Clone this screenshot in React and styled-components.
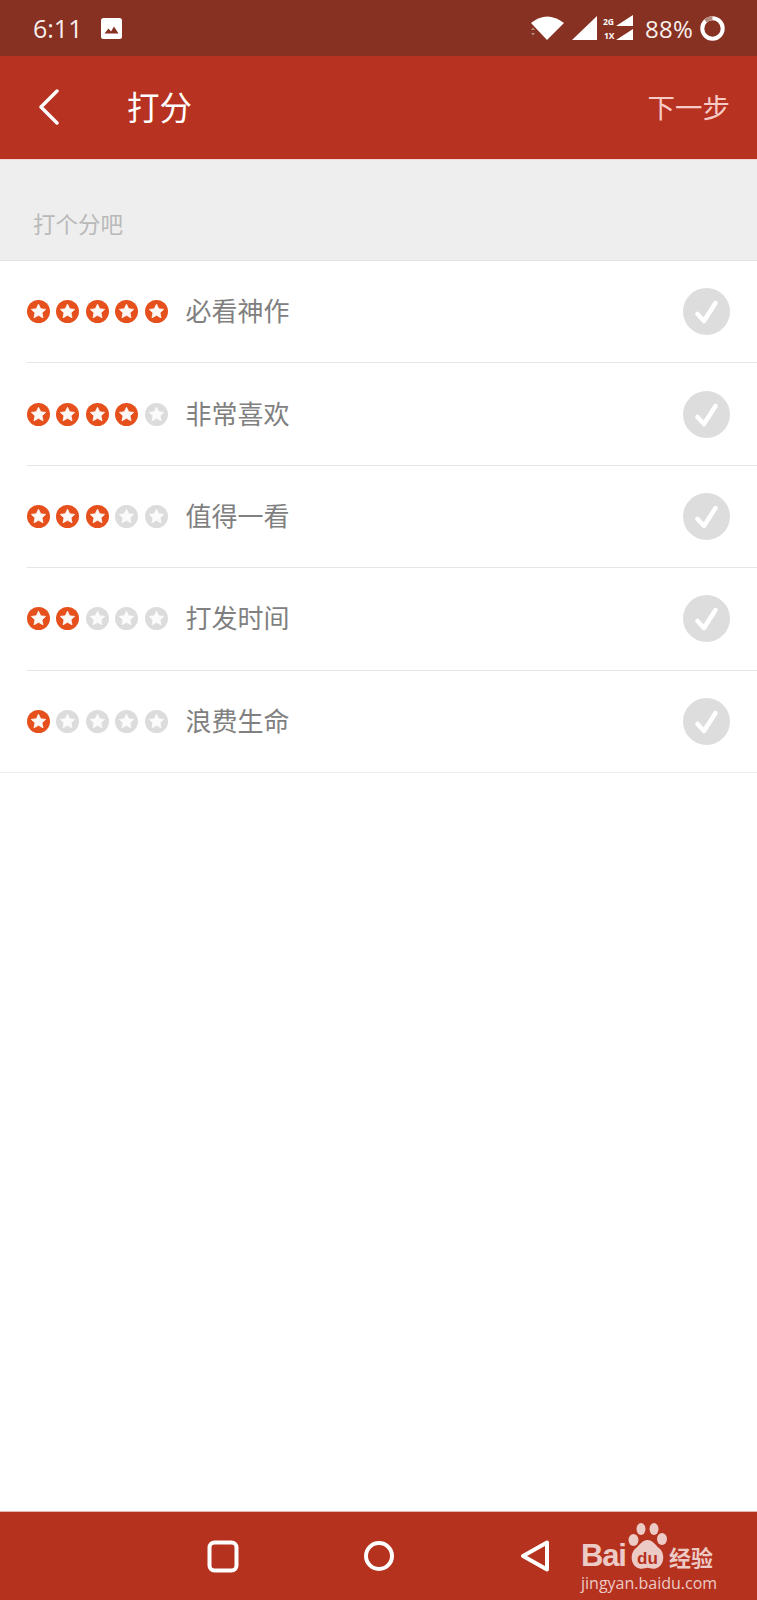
import React from "react";
import styled, { createGlobalStyle } from "styled-components";

const CJK = `"Noto Sans CJK SC", "Noto Sans", sans-serif`;

const GlobalStyle = createGlobalStyle`
  html, body {
    margin: 0;
    padding: 0;
    background: #fff;
    font-family: ${CJK};
  }
`;

const Page = styled.div`
  width: 757px;
  height: 1600px;
  display: flex;
  flex-direction: column;
  overflow: hidden;
  position: relative;
  background: #fff;
`;

const StatusBar = styled.div`
  height: 56px;
  flex: none;
  background: #873122;
  display: flex;
  align-items: center;
  padding: 0 32px 0 33px;
  color: #f7efed;
  font-family: "Open Sans", sans-serif;
  font-size: 25px;
`;

const Time = styled.span`
  width: 68px;
`;

const StatusRight = styled.div`
  margin-left: auto;
  display: flex;
  align-items: center;
`;

const Percent = styled.span`
  margin: 0 7px 0 11px;
  font-size: 24px;
  letter-spacing: 0.2px;
`;

const AppBar = styled.header`
  height: 104px;
  flex: none;
  box-sizing: border-box;
  background: #b73220;
  border-bottom: 1px solid #f3d9d5;
  display: flex;
  align-items: center;
  padding: 0 27px 2px 38px;
  color: #fff;
`;

const Title = styled.h1`
  margin: 0 0 0 67px;
  font-size: 32.500px;
  font-weight: 400;
  line-height: 1;
`;

const NextButton = styled.span`
  margin-left: auto;
  font-size: 27.500px;
  line-height: 1;
  color: #f6cbc5;
`;

const SectionHead = styled.div`
  height: 101px;
  flex: none;
  box-sizing: border-box;
  background: #eeeeee;
  border-bottom: 1px solid #e2e2e2;
  display: flex;
  align-items: flex-end;
  padding: 0 32px 22px 33px;
  font-size: 22.500px;
  line-height: 30px;
  color: #b9b9b9;
`;

const List = styled.ul`
  list-style: none;
  margin: 0;
  padding: 0;
`;

const Row = styled.li`
  height: 102.400px;
  box-sizing: border-box;
  margin-left: ${(p) => (p.$last ? 0 : "27px")};
  padding: ${(p) => (p.$last ? "0 27px 0 27px" : "0 27px 0 0")};
  border-bottom: 1px solid ${(p) => (p.$last ? "#eeeeee" : "#e6e6e6")};
  display: flex;
  align-items: center;
`;

const Stars = styled.div`
  display: flex;
  gap: 6.400px;
  margin-right: 18px;
`;

const StarDisc = styled.svg`
  width: 23px;
  height: 23px;
  display: block;
`;

const Label = styled.span`
  font-size: 26px;
  line-height: 1;
  color: #808080;
  margin-top: -3px;
`;

const CheckDisc = styled.svg`
  width: 47px;
  height: 47px;
  margin-left: auto;
  display: block;
`;

const Spacer = styled.div`
  flex: 1;
`;

const NavBar = styled.nav`
  height: 89px;
  flex: none;
  box-sizing: border-box;
  background: #b5321f;
  border-top: 1px solid #e3b7b0;
  display: flex;
  align-items: center;
  justify-content: center;
  gap: 122px;
`;

const NavIcon = styled.svg`
  width: 34px;
  height: 34px;
  display: block;
  fill: none;
  stroke: #fff;
  stroke-width: 4;
  stroke-linejoin: round;
`;

const Watermark = styled.div`
  position: absolute;
  left: 581px;
  bottom: 7px;
  width: 136px;
  color: #eccac5;
`;

const BrandLine = styled.div`
  display: flex;
  align-items: flex-end;
  height: 47px;
`;

const BrandBai = styled.span`
  font-family: "Liberation Sans", sans-serif;
  font-weight: 700;
  font-size: 31px;
  line-height: 29px;
  letter-spacing: -1.200px;
  width: 46px;
`;

const BrandPaw = styled.svg`
  width: 41px;
  height: 47px;
  display: block;
  flex: none;
  margin-right: 1px;
`;

const BrandJy = styled.span`
  font-size: 22px;
  font-weight: 700;
  line-height: 28px;
  white-space: nowrap;
`;

const BrandUrl = styled.div`
  font-family: "Open Sans", sans-serif;
  font-size: 16px;
  line-height: 20px;
  margin-top: 3px;
  white-space: nowrap;
`;

const StarIcon = ({ on }) => (
  <StarDisc viewBox="0 0 23 23">
    <circle cx="11.5" cy="11.5" r="11.5" fill={on ? "#e5501c" : "#dcdcdc"} />
    <path
      d="M11.5 4.2l2.2 4.6 5 .6-3.7 3.4 1 5-4.5-2.5L7 17.8l1-5-3.7-3.4 5-.6z"
      fill="#fff"
      stroke="#fff"
      strokeWidth="0.8"
      strokeLinejoin="round"
      opacity={on ? 0.96 : 0.9}
    />
  </StarDisc>
);

const CheckIcon = () => (
  <CheckDisc viewBox="0 0 47 47">
    <circle cx="23.5" cy="23.5" r="23.5" fill="#dddddd" />
    <path
      d="M14.5 26l6.5 7 11.500-18"
      fill="none"
      stroke="#fff"
      strokeWidth="4.500"
      strokeLinecap="round"
      strokeLinejoin="round"
    />
  </CheckDisc>
);

const ratings = [
  { score: 5, label: "必看神作" },
  { score: 4, label: "非常喜欢" },
  { score: 3, label: "值得一看" },
  { score: 2, label: "打发时间" },
  { score: 1, label: "浪费生命" },
];

const App = () => (
  <Page>
    <GlobalStyle />
    <StatusBar>
      <Time>6:11</Time>
      <svg width="21" height="21" viewBox="0 0 21 21">
        <rect width="21" height="21" rx="2.500" fill="#fff" />
        <path d="M3.500 15.500l4-5 2.500 3 3-5 4.500 7z" fill="#873122" />
      </svg>
      <StatusRight>
        <svg width="36" height="26" viewBox="0 0 36 26">
          <path d="M1 8 Q17 -5 34 8 L17 25z" fill="#fff" />
          <path d="M1 15l2-2.500 2 2.500zM1 18l2 2.500 2-2.500z" fill="#b58a80" />
        </svg>
        <svg width="25" height="26" viewBox="0 0 25 26" style={{ marginLeft: 6 }}>
          <path d="M0 25 L25 1 V25z" fill="#fff" />
        </svg>
        <svg width="31" height="26" viewBox="0 0 31 26" style={{ marginLeft: 6 }}>
          <text x="0" y="10" fontSize="8.500" fontWeight="700" fill="#fff" fontFamily="Open Sans">2G</text>
          <text x="1" y="24" fontSize="8.500" fontWeight="700" fill="#fff" fontFamily="Open Sans">1X</text>
          <path d="M13 11 L30 0 V11z M13 25 L30 14 V25z" fill="#fff" />
        </svg>
        <Percent>88%</Percent>
        <svg width="25" height="25" viewBox="0 0 25 25">
          <circle cx="12.500" cy="12.500" r="10.200" fill="none" stroke="#fff" strokeWidth="4" />
          <path d="M12.500 2.300 A10.200 10.200 0 0 0 5.500 5" fill="none" stroke="#b58a80" strokeWidth="4" />
        </svg>
      </StatusRight>
    </StatusBar>

    <AppBar>
      <svg width="22" height="36" viewBox="0 0 22 36">
        <path d="M19 2L3 18l16 16" fill="none" stroke="#fff" strokeWidth="3.400" strokeLinecap="round" strokeLinejoin="round" />
      </svg>
      <Title>打分</Title>
      <NextButton>下一步</NextButton>
    </AppBar>

    <SectionHead>打个分吧</SectionHead>

    <List>
      {ratings.map((r, i) => {
        const last = i === ratings.length - 1;
        return (
          <Row key={r.score} $last={last}>
            <Stars>
              {[1, 2, 3, 4, 5].map((n) => (
                <StarIcon key={n} on={n <= r.score} />
              ))}
            </Stars>
            <Label>{r.label}</Label>
            <CheckIcon />
          </Row>
        );
      })}
    </List>

    <Spacer />

    <NavBar>
      <NavIcon viewBox="0 0 34 34">
        <rect x="3.500" y="3.500" width="27" height="28" rx="5" />
      </NavIcon>
      <NavIcon viewBox="0 0 34 34">
        <circle cx="17" cy="17" r="13" />
      </NavIcon>
      <NavIcon viewBox="0 0 34 34">
        <path d="M29 3.500V30.500L5 17z" />
      </NavIcon>
    </NavBar>

    <Watermark>
      <BrandLine>
        <BrandBai>Bai</BrandBai>
        <BrandPaw viewBox="0 0 41 47">
          <g fill="#eccac5">
            <ellipse cx="6.500" cy="17" rx="5" ry="6" />
            <ellipse cx="14" cy="6" rx="4.500" ry="6" />
            <ellipse cx="27" cy="6" rx="4.500" ry="6" />
            <ellipse cx="35" cy="16" rx="5" ry="6" />
            <path d="M20.500 17c5 0 8 5 12 8.500 6 5 5 18-4 20-4 .8-6-.8-8-.8s-4 1.600-8 .8c-9-2-10-15-4-20 4-3.500 7-8.500 12-8.500z" />
          </g>
          <text x="20.500" y="41" textAnchor="middle" fontSize="17" fontWeight="700" fill="#b5321f" fontFamily="Liberation Sans">du</text>
        </BrandPaw>
        <BrandJy>经验</BrandJy>
      </BrandLine>
      <BrandUrl>jingyan.baidu.com</BrandUrl>
    </Watermark>
  </Page>
);

export default App;
